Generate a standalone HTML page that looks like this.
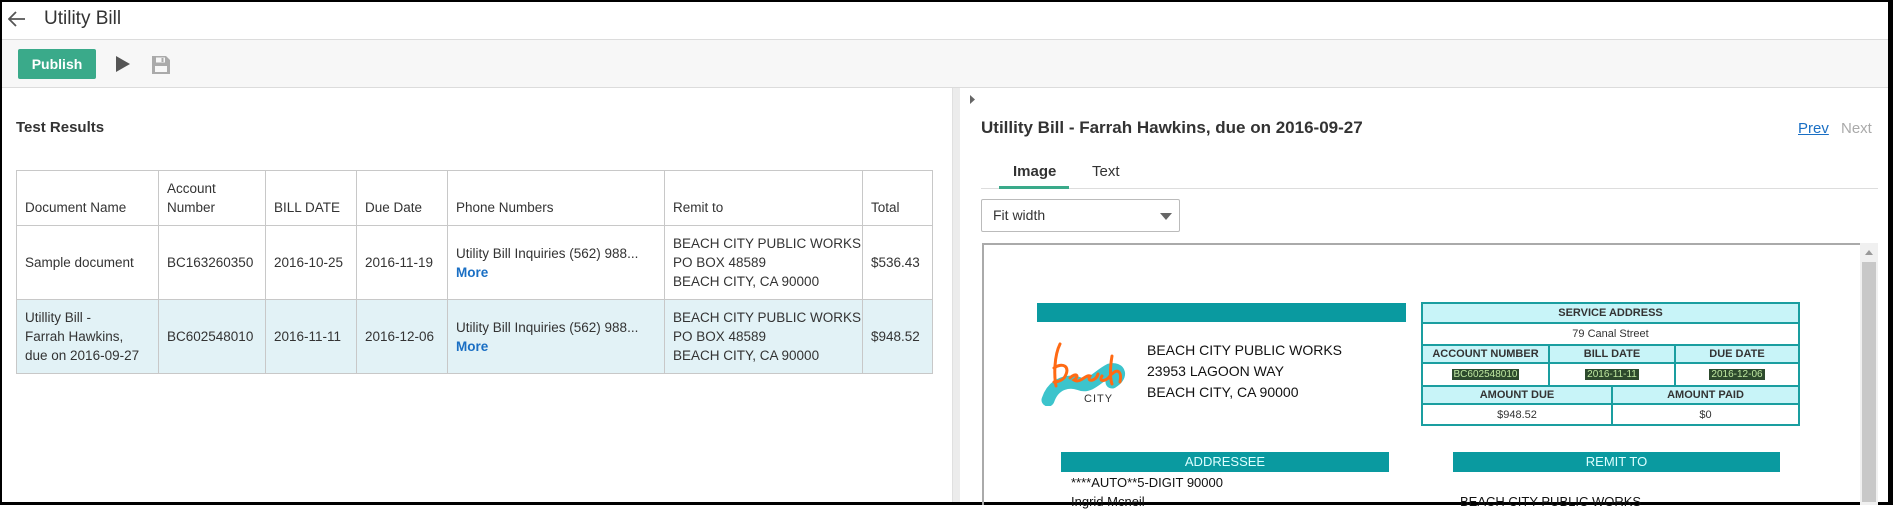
<!DOCTYPE html>
<html><head><meta charset="utf-8"><style>
*{margin:0;padding:0;box-sizing:border-box}
body{width:1893px;height:505px;overflow:hidden;background:#fff;font-family:"Liberation Sans",sans-serif;color:#333;position:relative}
.a{position:absolute}
table.t{position:absolute;left:16px;top:170px;border-collapse:collapse;font-size:13.5px;color:#333;table-layout:fixed;width:916px}
table.t td{border:1px solid #c8c8c8;padding:0 8px;vertical-align:middle;line-height:19px;white-space:nowrap;overflow:hidden}
table.t tr.s td{background:#e2f2f6}
.m{color:#1a6fc4;font-weight:bold}
.d{font-family:"Liberation Sans",sans-serif;color:#111}
.st{position:absolute;left:1421px;top:302px;width:379px;border:2px solid #1a9ea0;font-size:11px;text-align:center}
.st div{position:absolute;border:1px solid #1a9ea0;display:flex;align-items:center;justify-content:center}
.h{background:#c8f4f8;font-weight:bold}
.hl{background:#2d4a2d;color:#bfe8a0;font-size:10px;padding:0 2px;line-height:11px}
</style></head><body>
<div class="a" style="left:0;top:0;width:2px;height:505px;background:#000"></div>
<div class="a" style="left:1888px;top:0;width:5px;height:505px;background:#000"></div>
<div class="a" style="left:0;top:502px;width:1893px;height:3px;background:#000"></div>
<div class="a" style="left:0;top:0;width:1893px;height:2px;background:#000"></div>
<!-- header -->
<svg class="a" style="left:8px;top:11px" width="18" height="16" viewBox="0 0 18 16"><path d="M17 8H2M8 1L1 8l7 7" fill="none" stroke="#555" stroke-width="1.8"/></svg>
<div class="a" style="left:44px;top:8px;font-size:19px;color:#333">Utility Bill</div>
<div class="a" style="left:2px;top:39px;width:1886px;height:49px;background:#f7f7f7;border-top:1px solid #dcdcdc;border-bottom:1px solid #dcdcdc"></div>
<div class="a" style="left:18px;top:49px;width:78px;height:30px;background:#3aaa8a;border-radius:2px;color:#fff;font-weight:bold;font-size:14px;line-height:30px;text-align:center">Publish</div>
<svg class="a" style="left:116px;top:56px" width="14" height="16"><path d="M0 0L14 8L0 16Z" fill="#555"/></svg>
<svg class="a" style="left:152px;top:56px" width="18" height="18" viewBox="0 0 18 18"><path d="M0 0H14L18 4V18H0Z" fill="#aaa"/><rect x="4" y="1.5" width="9" height="5" fill="#f7f7f7"/><rect x="9.5" y="2" width="2" height="4" fill="#aaa"/><rect x="3" y="10" width="12" height="6" fill="#f7f7f7"/></svg>
<!-- left -->
<div class="a" style="left:16px;top:119px;font-size:15px;font-weight:bold;color:#333">Test Results</div>
<table class="t">
<colgroup><col style="width:142px"><col style="width:107px"><col style="width:91px"><col style="width:91px"><col style="width:217px"><col style="width:198px"><col style="width:70px"></colgroup>
<tr style="height:55px"><td style="padding-top:18px">Document Name</td><td>Account<br>Number</td><td style="padding-top:18px">BILL DATE</td><td style="padding-top:18px">Due Date</td><td style="padding-top:18px">Phone Numbers</td><td style="padding-top:18px">Remit to</td><td style="padding-top:18px">Total</td></tr>
<tr style="height:74px"><td>Sample document</td><td>BC163260350</td><td>2016-10-25</td><td>2016-11-19</td><td>Utility Bill Inquiries (562) 988...<br><span class="m">More</span></td><td>BEACH CITY PUBLIC WORKS<br>PO BOX 48589<br>BEACH CITY, CA 90000</td><td>$536.43</td></tr>
<tr class="s" style="height:74px"><td>Utillity Bill -<br>Farrah Hawkins,<br>due on 2016-09-27</td><td>BC602548010</td><td>2016-11-11</td><td>2016-12-06</td><td>Utility Bill Inquiries (562) 988...<br><span class="m">More</span></td><td>BEACH CITY PUBLIC WORKS<br>PO BOX 48589<br>BEACH CITY, CA 90000</td><td>$948.52</td></tr>
</table>
<!-- splitter -->
<div class="a" style="left:952px;top:88px;width:8px;height:414px;background:#ececec;border-left:1px solid #e0e0e0"></div>
<svg class="a" style="left:970px;top:95px" width="5" height="9"><path d="M0 0L5 4.5L0 9Z" fill="#666"/></svg>
<!-- right -->
<div class="a" style="left:981px;top:118px;font-size:17px;font-weight:bold;color:#333">Utillity Bill - Farrah Hawkins, due on 2016-09-27</div>
<div class="a" style="left:1798px;top:120px;font-size:15px;color:#1a6fc4;text-decoration:underline">Prev</div>
<div class="a" style="left:1841px;top:120px;font-size:15px;color:#aaa">Next</div>
<div class="a" style="left:1013px;top:163px;font-size:15px;font-weight:bold;color:#333">Image</div>
<div class="a" style="left:1092px;top:163px;font-size:15px;color:#333">Text</div>
<div class="a" style="left:981px;top:188px;width:897px;height:1px;background:#ddd"></div>
<div class="a" style="left:999px;top:186px;width:70px;height:3px;background:#3aaa8a"></div>
<div class="a" style="left:981px;top:199px;width:199px;height:33px;border:1px solid #bbb;border-radius:2px;font-size:14px;line-height:31px;padding-left:11px;color:#333">Fit width</div>
<svg class="a" style="left:1160px;top:213px" width="12" height="7"><path d="M0 0H12L6 7Z" fill="#666"/></svg>
<div class="a" style="left:982px;top:243px;width:878px;height:262px;border:2px solid #aaa;border-bottom:none;border-right:none"></div>
<div class="a" style="left:1860px;top:243px;width:18px;height:262px;background:#f0f0f0"></div>
<svg class="a" style="left:1865px;top:250px" width="8" height="5"><path d="M0 5L4 0L8 5Z" fill="#999"/></svg>
<div class="a" style="left:1862px;top:262px;width:14px;height:240px;background:#c8c8c8"></div>
<!-- document -->
<div class="a" style="left:1037px;top:303px;width:369px;height:19px;background:#0a9aa0"></div>
<svg class="a" style="left:1040px;top:342px" width="88" height="64" viewBox="0 0 88 64">
<path d="M8 58C14 40 30 38 40 42C50 46 58 34 70 28C80 26 82 34 72 40" fill="none" stroke="#3cc4cc" stroke-width="13" stroke-linecap="round"/>
<path d="M20 2C14 14 14 34 16 44M14 26C22 20 32 24 24 36C20 40 14 40 14 40M30 36C36 30 40 34 34 38C40 42 46 32 50 34C46 40 56 40 58 32M62 34C58 40 66 40 70 34M72 14C70 26 70 36 72 42M72 32C78 26 82 30 80 40" fill="none" stroke="#ff6a14" stroke-width="3" stroke-linecap="round"/>
<text x="44" y="60" font-size="11" fill="#333" font-family="Liberation Sans" letter-spacing="1">CITY</text>
</svg>
<div class="a d" style="left:1147px;top:340px;font-size:14px;line-height:21px">BEACH CITY PUBLIC WORKS<br>23953 LAGOON WAY<br>BEACH CITY, CA 90000</div>
<div class="st" style="height:124px">
<div class="h" style="left:-1px;top:-1px;width:377px;height:20px">SERVICE ADDRESS</div>
<div style="left:-1px;top:19px;width:377px;height:22px">79 Canal Street</div>
<div class="h" style="left:-1px;top:41px;width:127px;height:18px">ACCOUNT NUMBER</div>
<div class="h" style="left:126px;top:41px;width:126px;height:18px">BILL DATE</div>
<div class="h" style="left:252px;top:41px;width:124px;height:18px">DUE DATE</div>
<div style="left:-1px;top:59px;width:127px;height:23px"><span class="hl">BC602548010</span></div>
<div style="left:126px;top:59px;width:126px;height:23px"><span class="hl">2016-11-11</span></div>
<div style="left:252px;top:59px;width:124px;height:23px"><span class="hl">2016-12-06</span></div>
<div class="h" style="left:-1px;top:82px;width:190px;height:18px">AMOUNT DUE</div>
<div class="h" style="left:189px;top:82px;width:187px;height:18px">AMOUNT PAID</div>
<div style="left:-1px;top:100px;width:190px;height:22px">$948.52</div>
<div style="left:189px;top:100px;width:187px;height:22px">$0</div>
</div>
<div class="a" style="left:1061px;top:452px;width:328px;height:20px;background:#0a9aa0;color:#dff;font-size:13px;text-align:center;line-height:20px">ADDRESSEE</div>
<div class="a" style="left:1453px;top:452px;width:327px;height:20px;background:#0a9aa0;color:#dff;font-size:13px;text-align:center;line-height:20px">REMIT TO</div>
<div class="a d" style="left:1071px;top:473px;font-size:13px;line-height:19px">****AUTO**5-DIGIT 90000<br>Ingrid Mcneil</div>
<div class="a d" style="left:1460px;top:492px;font-size:13px;line-height:19px">BEACH CITY PUBLIC WORKS</div>
</body></html>
